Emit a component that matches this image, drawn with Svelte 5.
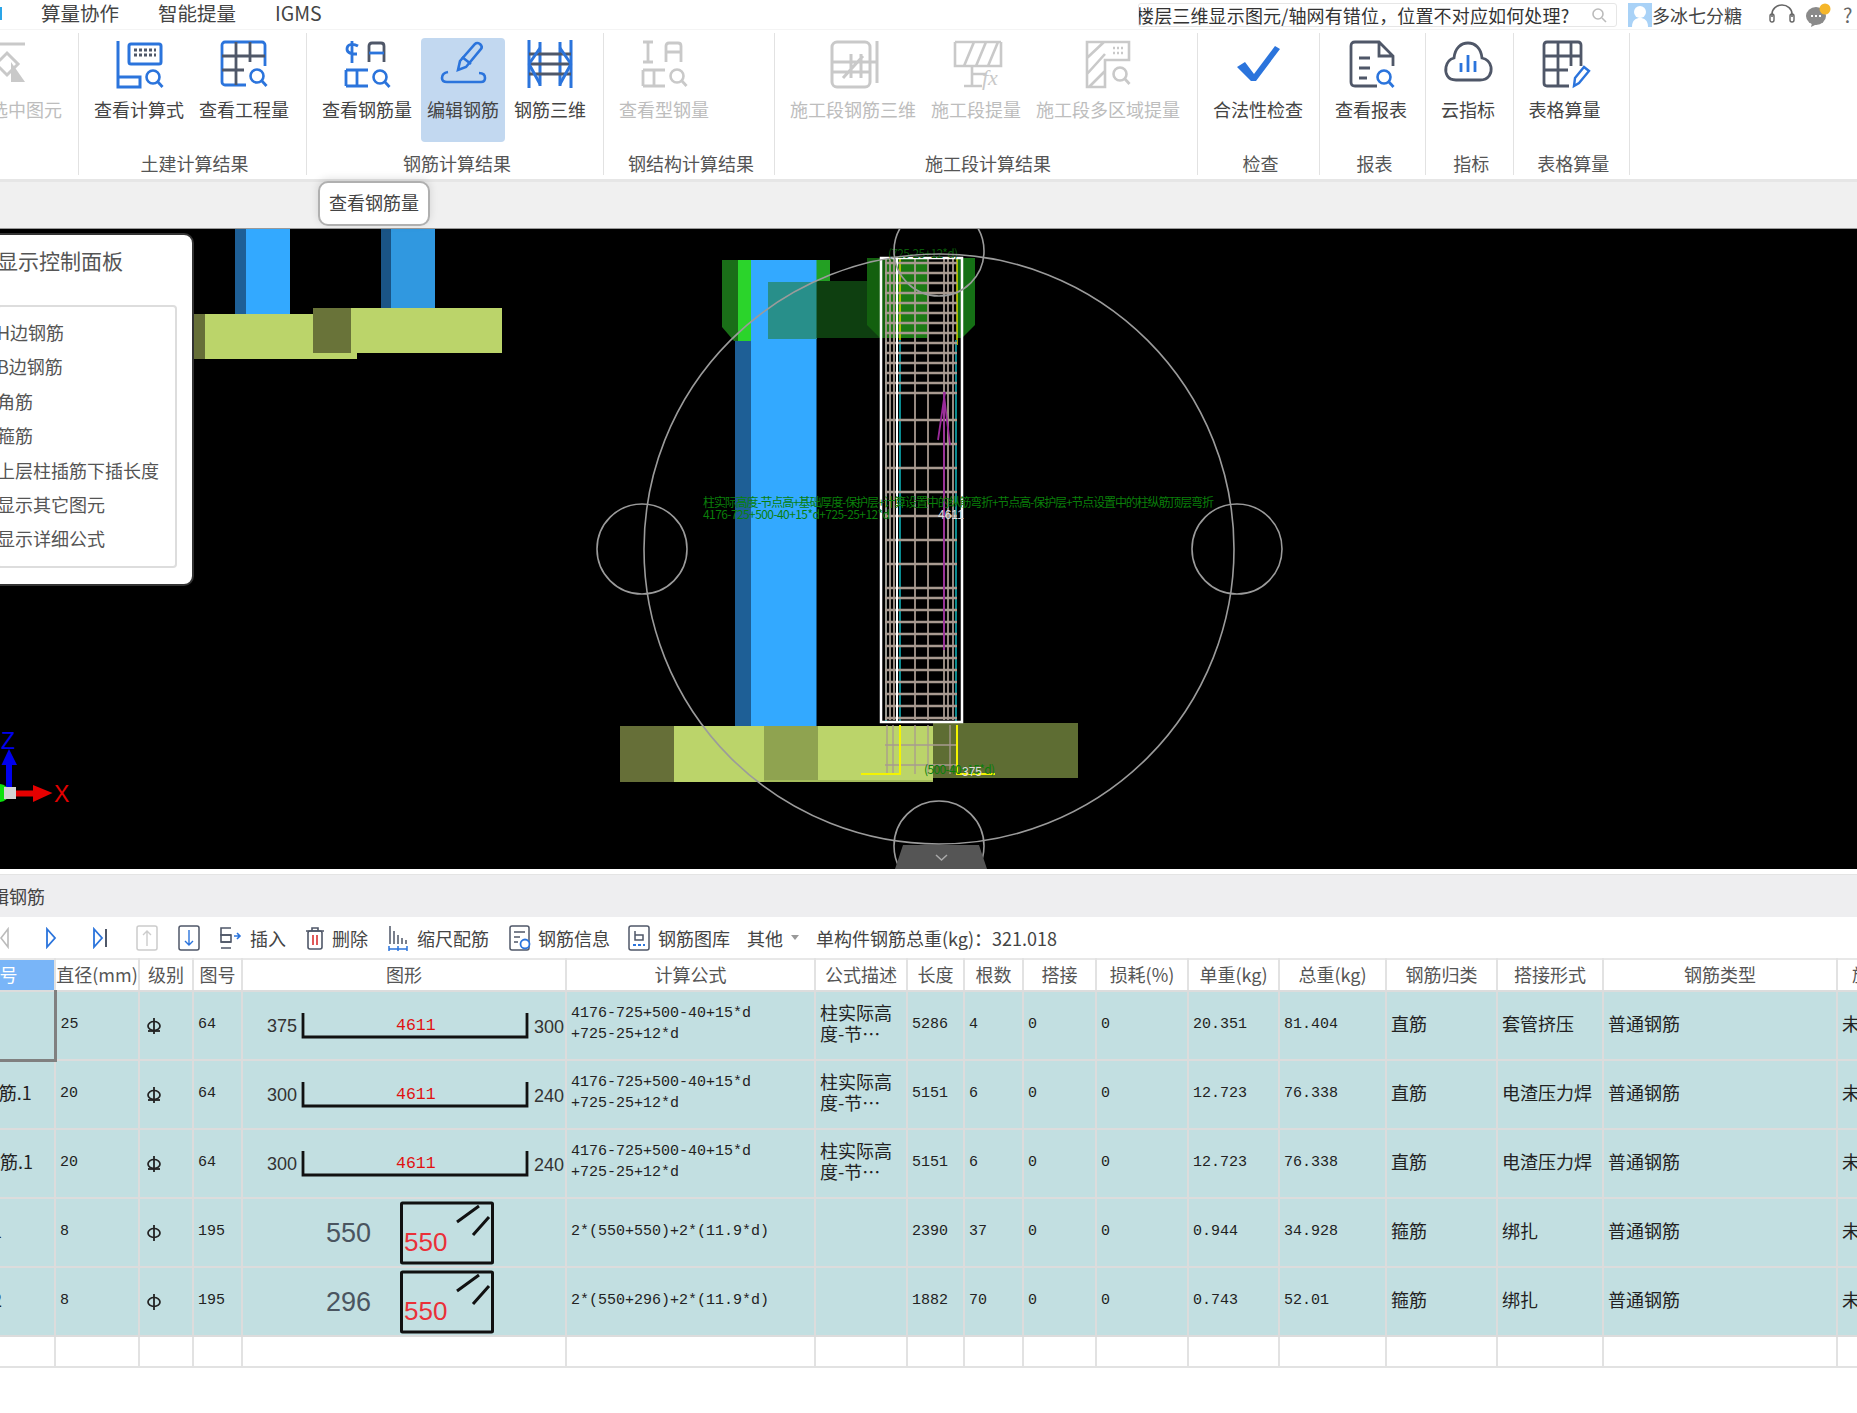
<script>
  const B = '#2b74dc', S = '#4f5768', G = '#c9c9c9';
  const mag = (x, y, c) => `<circle cx="${x}" cy="${y}" r="6.5" fill="none" stroke="${c}" stroke-width="2.6"/><path d="M${x + 5} ${y + 5}l4.5 5" stroke="${c}" stroke-width="2.8" fill="none"/>`;
  const steel = (a, b, m) => `<g fill="none" stroke-width="2.8"><path d="M8 2v20M3 2h10M3 22h10" stroke="${a}"/><path d="M26 22V6q0-3 3-3h9q3 0 3 3v16M26 12h15" stroke="${b}"/><path d="M3 46V30M14 30v16M3 30h22M3 46h22M14 38h0" stroke="${a}"/></g>${mag(37, 36, m)}`;
  const grid = (o, l) => `<g fill="none" stroke-width="2.8"><rect x="2" y="2" width="43" height="43" rx="3" stroke="${o}"/><path d="M16 2v30M30 2v20M2 16h43M2 30h22M16 32v13" stroke="${l}"/></g>`;
  const icons = {
    sel: `<g fill="none" stroke="${G}" stroke-width="3"><path d="M-14 4H23M-6 24l11-11 11 11-11 11z"/></g><path d="M9 22l14 20H9z" fill="${G}"/>`,
    calc: `<g fill="none" stroke="${B}" stroke-width="3"><path d="M3 1v46h22V37H3"/><rect x="14" y="4" width="32" height="20" rx="2"/></g><path d="M19 10h22M19 15h22" stroke="${S}" stroke-width="3" stroke-dasharray="3 2"/>${mag(38, 37, B)}`,
    qty: `${grid(B, S)}<rect x="26" y="26" width="22" height="22" fill="#fff"/>${mag(37, 36, B)}`,
    rebar: `<g fill="none" stroke-width="2.8"><path d="M9 1v22M15 6c-5-3-11-2-11 3s6 5 10 5" stroke="${B}"/><path d="M26 22V6q0-3 3-3h9q3 0 3 3v16" stroke="${S}"/><path d="M26 13h15" stroke="${B}"/><path d="M3 30h22M3 46h22M3 30v16M14 30v16" stroke="${B}"/></g>${mag(37, 37, B)}`,
    edit: `<g fill="none" stroke="${B}" stroke-width="2.6"><path d="M19 30l2-9 15-17q2-2 5 0 3 3 1 5L27 27z"/><path d="M23 17l9 7M9 32q-6 1-6 6 0 4 5 4h34q4 0 4-4 0-5-6-5"/></g>`,
    d3: `<g fill="none" stroke-width="3"><path d="M3 0v48M45 0v48M14 2v44M34 2v44" stroke="${B}"/><path d="M3 14h42M3 24h42M3 34h42" stroke="${S}"/><path d="M3 24L14 8M3 24l11 20M34 8l11 16M34 44l11-20" stroke="${B}"/></g>`,
    steelOff: steel(G, G, G),
    seg3d: `<g fill="none" stroke="${G}" stroke-width="3"><rect x="3" y="2" width="38" height="45" rx="5"/><path d="M48 1v42M3 22h45M3 32h38M14 38l20-22M22 14v24M32 14v24"/></g>`,
    segFx: `<g fill="none" stroke="${G}" stroke-width="2.6"><path d="M3 2h46M3 2v24h46V2M12 26L22 2M24 26L34 2M36 26L46 2M20 26v20M12 46h18M20 34h14"/></g><text x="30" y="45" font-family="Liberation Serif" font-style="italic" font-size="22" fill="${G}">fx</text>`,
    segArea: `<g fill="none" stroke="${G}" stroke-width="2.6"><path d="M24 2H3v45h18V20h24V2zM3 18L20 2M3 34L21 14M5 47l16-16"/></g><path d="M29 8h12M29 13h12" stroke="${G}" stroke-width="2.4" stroke-dasharray="2 2"/>${mag(36, 34, G)}`,
    check: `<path d="M3 27l8-5 9 12L41 6l5 3-24 32h-5z" fill="${B}"/>`,
    report: `<g fill="none" stroke="${S}" stroke-width="2.8"><path d="M30 46H8q-4 0-4-4V6q0-4 4-4h24l14 14v10M32 2v14h14M12 18h11M12 28h11M12 38h8" /></g>${mag(37, 37, B)}`,
    cloud: `<path d="M12 40C3 40 1 33 2 27c1-5 4-8 8-9C11 8 17 3 24 3s13 5 14 15c5 1 8 4 9 9 1 6-2 13-11 13z" fill="none" stroke="${S}" stroke-width="2.8"/><path d="M17 23v9M24 15v17M31 21v11" stroke="${B}" stroke-width="2.8"/>`,
    table: `<g fill="none" stroke="${S}" stroke-width="2.8"><path d="M40 26V5q0-3-3-3H6Q3 2 3 5v38q0 3 3 3h22M17 2v44M30 2v24M3 16h37M3 30h24"/></g><path d="M33 46l1-8 9-11 5 4-10 12z" fill="#fff" stroke="${B}" stroke-width="2.4"/>`
  };
  const ribbon = [
    { w: 'w0', label: '', btns: [{ t: '选中图元', i: 'sel', off: 1 }] },
    { w: 'w1', label: '土建计算结果', btns: [{ t: '查看计算式', i: 'calc' }, { t: '查看工程量', i: 'qty' }] },
    { w: 'w2', label: '钢筋计算结果', btns: [{ t: '查看钢筋量', i: 'rebar' }, { t: '编辑钢筋', i: 'edit', active: 1 }, { t: '钢筋三维', i: 'd3' }] },
    { w: 'w3', label: '钢结构计算结果', btns: [{ t: '查看型钢量', i: 'steelOff', off: 1 }] },
    { w: 'w4', label: '施工段计算结果', btns: [{ t: '施工段钢筋三维', i: 'seg3d', off: 1 }, { t: '施工段提量', i: 'segFx', off: 1 }, { t: '施工段多区域提量', i: 'segArea', off: 1 }] },
    { w: 'w5', label: '检查', btns: [{ t: '合法性检查', i: 'check' }] },
    { w: 'w6', label: '报表', btns: [{ t: '查看报表', i: 'report' }] },
    { w: 'w7', label: '指标', btns: [{ t: '云指标', i: 'cloud' }] },
    { w: 'w8', label: '表格算量', btns: [{ t: '表格算量', i: 'table' }] }
  ];
  const panelItems = ['H边钢筋', 'B边钢筋', '角筋', '箍筋', '上层柱插筋下插长度', '显示其它图元', '显示详细公式'];

  const range = (a, b, s) => { const r = []; for (let v = a; v <= b; v += s) r.push(v); return r; };
  const cageH = [...range(263, 400, 10), ...range(420, 590, 24), ...range(598, 720, 12)];
  const cageV = [886, 890, 894, 915, 928, 944, 948, 953];

  const cols = [110, 84, 54, 49, 324, 249, 92, 57, 59, 73, 92, 91, 107, 111, 106, 234, 84];
  const heads = ['序号', '直径(mm)', '级别', '图号', '图形', '计算公式', '公式描述', '长度', '根数', '搭接', '损耗(%)', '单重(kg)', '总重(kg)', '钢筋归类', '搭接形式', '钢筋类型', '施工段'];
  const f1 = ['4176-725+500-40+15*d', '+725-25+12*d'];
  const rows = [
    { name: '角筋', d: '25', hrb: 1, fig: '64', u: ['375', '300'], f: f1, desc: 1, len: '5286', n: '4', w: '20.351', t: '81.404', c: '直筋', lap: '套管挤压' },
    { name: 'B边纵筋.1', d: '20', hrb: 1, fig: '64', u: ['300', '240'], f: f1, desc: 1, len: '5151', n: '6', w: '12.723', t: '76.338', c: '直筋', lap: '电渣压力焊' },
    { name: 'H边纵筋.1', d: '20', hrb: 1, fig: '64', u: ['300', '240'], f: f1, desc: 1, len: '5151', n: '6', w: '12.723', t: '76.338', c: '直筋', lap: '电渣压力焊' },
    { name: '箍筋.1', d: '8', hrb: 0, fig: '195', box: '550', f: ['2*(550+550)+2*(11.9*d)'], len: '2390', n: '37', w: '0.944', t: '34.928', c: '箍筋', lap: '绑扎' },
    { name: '箍筋.2', d: '8', hrb: 0, fig: '195', box: '296', f: ['2*(550+296)+2*(11.9*d)'], len: '1882', n: '70', w: '0.743', t: '52.01', c: '箍筋', lap: '绑扎' }
  ];
</script>

<div class="app">
  <header class="topbar">
    <i class="tabmark"></i>
    <nav class="menu"><span>算量协作</span><span>智能提量</span><span>IGMS</span></nav>
    <div class="search">
      <span class="q">楼层三维显示图元/轴网有错位，位置不对应如何处理?</span>
      <svg width="16" height="16" viewBox="0 0 16 16"><circle cx="7" cy="7" r="5" fill="none" stroke="#bbb" stroke-width="1.6"/><path d="M11 11l4 4" stroke="#bbb" stroke-width="1.6"/></svg>
    </div>
    <svg class="avatar" width="24" height="24" viewBox="0 0 24 24"><rect width="24" height="24" fill="#a9d2f7"/><circle cx="12" cy="9" r="6" fill="#fff"/><path d="M4 24c0-7 4-9 8-9s8 2 8 9z" fill="#fff"/></svg>
    <span class="user">多冰七分糖</span>
    <svg class="hs" width="26" height="22" viewBox="0 0 26 22"><path d="M3 13V10a10 9 0 0 1 20 0v3" fill="none" stroke="#666" stroke-width="1.6"/><rect x="1" y="10" width="4" height="8" rx="2" fill="none" stroke="#666" stroke-width="1.4"/><rect x="21" y="10" width="4" height="8" rx="2" fill="none" stroke="#666" stroke-width="1.4"/></svg>
    <svg class="chat" width="26" height="24" viewBox="0 0 26 24"><ellipse cx="11" cy="13" rx="10" ry="9" fill="#8a8a8a"/><path d="M7 20l-1 4 6-3z" fill="#8a8a8a"/><path d="M6 13h10" stroke="#fff" stroke-width="2" stroke-dasharray="2 2"/><circle cx="20" cy="6" r="5.5" fill="#f5b62a"/></svg>
    <span class="help">?</span>
  </header>

  <section class="ribbon">
    {#each ribbon as g}
      <div class="group {g.w}">
        <div class="btns">
          {#each g.btns as b}
            <div class="btn" class:off={b.off} class:active={b.active}>
              <svg class="ic" width="48" height="48" viewBox="0 0 48 48">{@html icons[b.i]}</svg>
              <span>{b.t}</span>
            </div>
          {/each}
        </div>
        <div class="glabel">{g.label}</div>
      </div>
    {/each}
  </section>

  <div class="band"><div class="tip">查看钢筋量</div></div>

  <main class="view">
    <svg class="scene" width="1857" height="640" viewBox="0 229 1857 640">
      <!-- background columns -->
      <rect x="235" y="229" width="11" height="85" fill="#1e5f96"/><rect x="246" y="229" width="44" height="85" fill="#33a9ff"/>
      <rect x="381" y="229" width="10" height="79" fill="#1a5485"/><rect x="391" y="229" width="44" height="79" fill="#3098e0"/>
      <rect x="192" y="314" width="13" height="45" fill="#666f38"/><rect x="205" y="314" width="152" height="45" fill="#bbd46a"/>
      <rect x="351" y="308" width="151" height="45" fill="#bbd46a"/><rect x="313" y="308" width="38" height="45" fill="#697339"/>

      <!-- footing -->
      <rect x="933" y="723" width="145" height="55" fill="#5e6d33"/>
      <rect x="620" y="726" width="54" height="56" fill="#666f38"/>
      <rect x="674" y="726" width="90" height="56" fill="#bbd46a"/>
      <rect x="764" y="726" width="54" height="54" fill="#8fa350"/>
      <rect x="818" y="726" width="115" height="54" fill="#bbd46a"/>
      <rect x="764" y="780" width="169" height="2" fill="#a5bc5c"/>

      <!-- column -->
      <path d="M722 260h16v81h-4l-12-14z" fill="#1a6e18"/>
      <path d="M738 260h13v81h-13z" fill="#2bd42b"/>
      <path d="M816 260h14v67l-14 12z" fill="#23a023"/>
      <rect x="735" y="341" width="16" height="385" fill="#1e5f96"/>
      <rect x="751" y="260" width="65.5" height="466" fill="#33a9ff"/>
      <rect x="768" y="282" width="48.5" height="57" fill="#288f8a"/>
      <rect x="816.5" y="281" width="64" height="57" fill="#0e3f10"/>
      <path d="M867 258h61v80h-48l-13-13z" fill="#13600f"/>
      <path d="M885 262h43v76h-43z" fill="#1c7a14"/>
      <path d="M957 258h18v67l-13 13h-5z" fill="#157015"/>

      <!-- rebar cage -->
      <path d="M900 257v88M957 257v88M900 258H957" stroke="#d8d800" stroke-width="1.5" fill="none"/>
      <path d="M900 340V723M956 340V723M886 340V723" stroke="#0a8a90" stroke-width="2"/>
      {#each cageV as x}<path d="M{x} 258V720" stroke="#a89a90" stroke-width="1.8"/>{/each}
      {#each cageH as y}<path d="M885 {y}H957" stroke="#a89a90" stroke-width="2.4"/>{/each}
      <path d="M945 392L938 440M944 392V650M944 395l6 50" stroke="#9a2a9a" stroke-width="1.8" fill="none"/>
      <rect x="881" y="258" width="81" height="464" fill="none" stroke="#fff" stroke-width="2.5"/>
      <path d="M897 258V722" stroke="#fff" stroke-width="2"/>
      <path d="M887 725V774M893 725V774M915 725V774M928 725V774M950 725V774M885 745H957M885 765H957" stroke="#a89a90" stroke-width="1.3"/>
      <path d="M861 774H900V725M957 725V774H995" fill="none" stroke="#f4f400" stroke-width="2"/>

      <!-- labels -->
      <text class="g" x="703" y="507" textLength="511">柱实际高度-节点高+基础厚度-保护层+计算设置中的纵筋弯折+节点高-保护层+节点设置中的柱纵筋顶层弯折</text>
      <text class="g" x="703" y="519" textLength="187">4176-725+500-40+15*d+725-25+12*d</text>
      <text class="g dark" x="888" y="258" textLength="70">(725-25+12*d)</text>
      <text class="g" x="924" y="774" textLength="71">(500-40+15*d)</text>
      <text class="w" x="938" y="519">4611</text>
      <text class="w" x="962" y="776">375</text>

      <!-- rotation gizmo -->
      <g fill="none" stroke="#9b9b9b" stroke-width="1.6">
        <circle cx="939" cy="549" r="295"/>
        <circle cx="642" cy="549" r="45"/>
        <circle cx="1237" cy="549" r="45"/>
        <circle cx="939" cy="251" r="45"/>
        <circle cx="939" cy="846" r="45"/>
      </g>
      <path d="M903 845H979L987 869H895z" fill="#555"/>
      <path d="M936 855l5.500 5 5.500-5" fill="none" stroke="#aaa" stroke-width="1.500"/>

      <!-- axes -->
      <path d="M6 765h6v24H6zM1.500 765H17L9 749z" fill="#0000ee"/>
      <circle cx="0" cy="793" r="9" fill="#0ee00e"/>
      <path d="M16 790.500H33V785L52.500 793 33 802V796.500H16z" fill="#e60000"/>
      <rect x="4" y="787" width="12" height="12" fill="#d4d4d4"/>
      <text class="axis z" x="1" y="749">Z</text>
      <text class="axis x" x="54" y="802">X</text>
    </svg>

    <aside class="panel">
      <h3>显示控制面板</h3>
      <ul>
        {#each panelItems as p}<li>{p}</li>{/each}
      </ul>
    </aside>
  </main>

  <div class="splitter"></div>
  <div class="ttl">编辑钢筋</div>

  <div class="tools">
    <svg class="t0" width="9" height="22" viewBox="0 0 9 22"><path d="M8 2L1 11l7 9z" fill="none" stroke="#bbb" stroke-width="1.6"/></svg>
    <svg class="t1" width="12" height="22" viewBox="0 0 12 22"><path d="M2 2l8 9-8 9z" fill="none" stroke={B} stroke-width="1.8"/></svg>
    <svg class="t2" width="16" height="22" viewBox="0 0 16 22"><path d="M2 2l8 9-8 9z" fill="none" stroke={B} stroke-width="1.8"/><path d="M14 2v18" stroke={S} stroke-width="2"/></svg>
    <svg class="t3" width="22" height="26" viewBox="0 0 22 26"><rect x="1" y="1" width="20" height="24" rx="2" fill="none" stroke="#ccc" stroke-width="1.5"/><path d="M11 21V6M7 10l4-4 4 4" fill="none" stroke="#ccc" stroke-width="1.4"/></svg>
    <svg class="t4" width="22" height="26" viewBox="0 0 22 26"><rect x="1" y="1" width="20" height="24" rx="2" fill="none" stroke={S} stroke-width="1.5"/><path d="M11 5v15M7 16l4 4 4-4" fill="none" stroke={B} stroke-width="1.4"/></svg>
    <div class="tool"><svg width="24" height="24" viewBox="0 0 24 24"><path d="M12 2H2v7h10M2 16h10M2 22h10" fill="none" stroke={S} stroke-width="1.6"/><path d="M2 9v0M15 10h6M18 7l3 3-3 3" fill="none" stroke={B} stroke-width="1.6"/><rect x="2" y="9" width="10" height="7" fill="none" stroke={S} stroke-width="1.6"/></svg>插入</div>
    <div class="tool"><svg width="20" height="24" viewBox="0 0 20 24"><path d="M1 5h18M7 5V2h6v3" fill="none" stroke={S} stroke-width="1.6"/><rect x="3" y="5" width="14" height="18" rx="2" fill="none" stroke={S} stroke-width="1.6"/><path d="M8 9v10M12 9v10" stroke="#d93030" stroke-width="1.6"/></svg>删除</div>
    <div class="tool scale"><svg width="20" height="26" viewBox="0 0 20 26"><path d="M2 1v18M6 6v13M10 10v9M14 13v6M18 15v4" stroke={S} stroke-width="1.5"/><path d="M1 24h18M1 21v5M19 21v5M10 21v5" stroke={B} stroke-width="1.5"/></svg>缩尺配筋</div>
    <div class="tool info"><svg width="23" height="26" viewBox="0 0 23 26"><rect x="1" y="1" width="19" height="24" rx="2" fill="none" stroke={S} stroke-width="1.5"/><path d="M5 7h11M5 12h6M5 17h4" stroke={S} stroke-width="1.5"/><circle cx="16" cy="19" r="4.500" fill="#fff" stroke={B} stroke-width="1.800"/></svg>钢筋信息</div>
    <div class="tool lib"><svg width="22" height="26" viewBox="0 0 22 26"><rect x="1" y="1" width="20" height="24" rx="2" fill="none" stroke={S} stroke-width="1.5"/><path d="M7 6v9h8v-5H7" fill="none" stroke={S} stroke-width="1.5"/><path d="M5 20h12" stroke={B} stroke-width="1.800" stroke-dasharray="3 2"/></svg>钢筋图库</div>
    <div class="tool other">其他<span class="caret"></span></div>
    <div class="tool total">单构件钢筋总重(kg)：321.018</div>
  </div>

  <div class="tablewrap">
    <table>
      <colgroup>{#each cols as c}<col style:width="{c}px" />{/each}</colgroup>
      <thead>
        <tr>{#each heads as h, i}<th class:cur={i === 0}>{h}</th>{/each}</tr>
      </thead>
      <tbody>
        {#each rows as r, ri}
          <tr class="data">
            <td class="cn name" class:focus={ri === 0}>{r.name}</td>
            <td class="num">{r.d}</td>
            <td class="sym">
              <svg width="16" height="18" viewBox="0 0 16 18"><ellipse cx="8" cy="9" rx="6" ry="4.500" fill="none" stroke="#222" stroke-width="1.700"/><path d="M8 1v16" stroke="#222" stroke-width="1.800"/>{#if r.hrb}<path d="M2 14h12" stroke="#222" stroke-width="1.800"/>{/if}</svg>
            </td>
            <td class="num">{r.fig}</td>
            <td class="shape">
              <svg width="324" height="67" viewBox="0 2 324 67">
                {#if r.u}
                  <text class="dim" x="24" y="42">{r.u[0]}</text>
                  <path d="M60 23V47H284V23" fill="none" stroke="#111" stroke-width="2.800"/>
                  <text class="red" x="153" y="40">4611</text>
                  <text class="dim" x="291" y="43">{r.u[1]}</text>
                {:else}
                  <text class="big" x="83" y="45">{r.box}</text>
                  <rect x="158.500" y="6" width="91" height="60" rx="1" fill="none" stroke="#111" stroke-width="3"/>
                  <path d="M214 25L236 9M230 38L246 20" stroke="#111" stroke-width="3"/>
                  <text class="big2" x="161" y="54">550</text>
                {/if}
              </svg>
            </td>
            <td class="num formula">{#each r.f as l}<div>{l}</div>{/each}</td>
            <td class="cn desc">{#if r.desc}柱实际高<br />度-节…{/if}</td>
            <td class="num">{r.len}</td>
            <td class="num">{r.n}</td>
            <td class="num">0</td>
            <td class="num">0</td>
            <td class="num">{r.w}</td>
            <td class="num">{r.t}</td>
            <td class="cn">{r.c}</td>
            <td class="cn">{r.lap}</td>
            <td class="cn">普通钢筋</td>
            <td class="cn">未划分</td>
          </tr>
        {/each}
        <tr class="empty">{#each cols as c}<td></td>{/each}</tr>
      </tbody>
    </table>
  </div>
</div>

<style>
  :global(body) { margin: 0; background: #fff; }
  .app {
    width: 1857px; height: 1413px; overflow: hidden; background: #fff;
    display: flex; flex-direction: column;
    font-family: "Noto Sans CJK SC", "Noto Sans", sans-serif; color: #444;
  }

  .topbar { height: 30px; display: flex; align-items: center; padding-left: 41px; padding-right: 2px; flex: none; position: relative; border-bottom: 1px solid #f4f4f4; box-sizing: border-box; }
  .tabmark { position: absolute; left: 0; top: 7px; width: 2px; height: 13px; background: #2aa5e8; }
  .menu { display: flex; gap: 39px; font-size: 19.5px; color: #444; line-height: 26px; margin-top: -4px; }
  .search { margin-left: auto; width: 479px; height: 24px; box-sizing: border-box; border: 1px solid #e6e6e6; border-radius: 3px; display: flex; align-items: center; justify-content: space-between; padding-right: 9px; overflow: hidden; }
  .q { font-size: 18px; line-height: 22px; color: #333; white-space: nowrap; margin-left: -3px; letter-spacing: 0.15px; }
  .avatar { margin-left: 11px; }
  .user { font-size: 18px; color: #444; line-height: 24px; width: 89px; white-space: nowrap; }
  .hs { margin-left: 28px; }
  .chat { margin-left: 10px; }
  .help { margin-left: 12px; font-size: 20px; color: #666; width: 12px; line-height: 24px; }

  .ribbon { display: flex; flex: none; height: 152px; margin-left: -25px; padding-top: 3px; box-sizing: border-box; border-bottom: 3px solid #e6e6e6; }
  .group { box-sizing: border-box; height: 142px; border-right: 1.5px solid #e2e2e2; padding: 5px 0 0 15px; display: flex; flex-direction: column; flex: none; }
  .w0 { width: 104px; } .w1 { width: 228px; } .w2 { width: 297px; } .w3 { width: 171px; }
  .w4 { width: 423px; } .w5 { width: 122px; } .w6 { width: 106px; } .w7 { width: 87.5px; } .w8 { width: 116.5px; }
  .btns { display: flex; gap: 15px; height: 105px; }
  .btn { display: flex; flex-direction: column; align-items: center; padding-top: 2px; box-sizing: border-box; font-size: 18px; line-height: 24px; color: #444; white-space: nowrap; border-radius: 4px; }
  .btn.off { color: #bdbdbd; }
  .btn.active { background: #c2d8f0; margin: 0 -6px; padding-left: 6px; padding-right: 6px; }
  .ic { margin-bottom: 9px; overflow: visible; flex: none; }
  .glabel { margin-top: 9px; line-height: 24px; height: 24px; font-size: 18px; color: #555; text-align: center; padding-left: 2px; padding-right: 13px; white-space: nowrap; }

  .band { height: 47px; box-sizing: border-box; background: #f0f0f0; flex: none; position: relative; border-bottom: 1px solid #999; }
  .tip { position: absolute; left: 318px; top: -1px; width: 112px; height: 45px; box-sizing: border-box; background: #fff; border: 2px solid #b0b0b0; border-radius: 10px; box-shadow: 0 -2px 8px rgba(0,0,0,.12); font-size: 18px; line-height: 39px; text-align: center; color: #444; z-index: 3; }

  .view { height: 640px; background: #000; flex: none; position: relative; overflow: hidden; }
  .scene { display: block; }
  .g { font-size: 12px; fill: #0a7f0a; font-family: "Noto Sans CJK SC", sans-serif; }
  .dark { fill: #0a5a0a; }
  .w { font-size: 12px; fill: #ddd; font-family: "Liberation Sans", sans-serif; }
  .axis { font-family: "Liberation Sans", sans-serif; font-size: 23px; }
  .z { fill: #0000ee; } .x { fill: #e60000; }

  .panel { position: absolute; left: -20px; top: 4px; width: 214px; height: 353px; box-sizing: border-box; background: #fff; border: 2px solid #333; border-radius: 10px; padding: 11px 15px 0 15px; }
  .panel h3 { margin: 0 0 31px; font-size: 21px; font-weight: 400; line-height: 28px; color: #555; white-space: nowrap; }
  .panel ul { list-style: none; margin: 0; padding: 8px 0 0; height: 263px; box-sizing: border-box; border: 2px solid #ddd; border-radius: 4px; width: 180px; }
  .panel li { height: 34.4px; line-height: 34.4px; font-size: 18px; color: #555; white-space: nowrap; margin-left: -2px; }

  .splitter { height: 6px; background: #fff; border-bottom: 1px solid #e4e4e4; box-sizing: border-box; flex: none; }
  .ttl { height: 42px; flex: none; background: #eeeef0; font-size: 18px; line-height: 43px; text-indent: -27px; color: #444; overflow: hidden; white-space: nowrap; }

  .tools { height: 41px; flex: none; display: flex; align-items: center; gap: 19px; font-size: 18px; color: #444; white-space: nowrap; }
  .tools svg { flex: none; }
  .t1 { margin-left: 17px; }
  .t2 { margin-left: 16px; }
  .t3 { margin-left: 9px; }
  .t4 { margin-left: 1px; }
  .tool { display: flex; align-items: center; gap: 7px; }
  .scale { gap: 9px; margin-left: 1px; }
  .info { gap: 6px; margin-left: 1px; }
  .lib { gap: 8px; margin-left: -1px; }
  .caret { width: 0; height: 0; border: 4px solid transparent; border-top: 5px solid #999; border-bottom: 0; margin-left: 1px; }
  .other { margin-left: -2px; }
  .total { margin-left: -2px; }

  .tablewrap { margin-left: -55px; flex: none; }
  table { border-collapse: collapse; table-layout: fixed; width: 1912px; font-size: 18px; }
  th { height: 32px; padding: 0 0 2px; box-sizing: border-box; font-weight: 400; color: #555; background: #fff; white-space: nowrap; overflow: hidden; text-align: center; border-right: 2px solid #e2e2e2; border-top: 2px solid #e8e8e8; border-bottom: 2px solid #dcdcdc; line-height: 24px; font-size: 18px; }
  th.cur { background: #79b5f8; color: #fff; }
  td { padding: 0 0 0 4px; box-sizing: border-box; border-right: 2px solid #dcdcdc; border-bottom: 2px solid #dcdcdc; white-space: nowrap; overflow: hidden; color: #222; }
  .data td { height: 69px; background: #c2dfe1; }
  .empty td { height: 31px; background: #fff; border-color: #e2e2e2; }
  .num { font-family: "Liberation Mono", monospace; font-size: 15px; line-height: 21px; color: #222; padding-bottom: 2px; }
  .cn { font-size: 18px; line-height: 21px; color: #222; padding-bottom: 5px; }
  .formula { padding-bottom: 3px; }
  .name { padding-left: 6px; }
  .focus { border-right: 3px solid #808080; border-bottom: 3px solid #808080; }
  .sym { padding-left: 6px; line-height: 0; }
  .sym svg { display: block; margin-top: 0; }
  .shape { padding: 0; line-height: 0; }
  .shape svg { display: block; }
  .dim { font-family: "Liberation Sans", sans-serif; font-size: 18px; fill: #333; }
  .red { font-family: "Liberation Mono", monospace; font-size: 16.500px; fill: #e01010; }
  .big { font-family: "Liberation Sans", sans-serif; font-size: 27px; fill: #4a5560; }
  .big2 { font-family: "Liberation Sans", sans-serif; font-size: 26px; fill: #ea3038; }
</style>
